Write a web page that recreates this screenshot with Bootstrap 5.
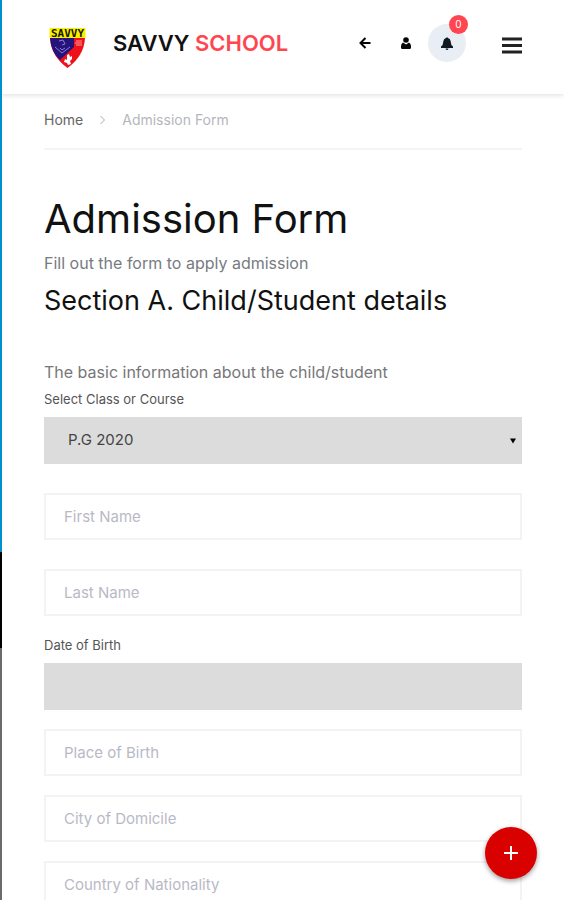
<!DOCTYPE html>
<html lang="en">
<head>
<meta charset="utf-8">
<meta name="viewport" content="width=device-width, initial-scale=1">
<title>Admission Form - Savvy School</title>
<link href="https://cdn.jsdelivr.net/npm/bootstrap@5.3.0/dist/css/bootstrap.min.css" rel="stylesheet">
<style>
body{font-family:Inter,"Open Sans",sans-serif;color:#111;background:#fff;display:flex;min-height:100vh}
.edge{width:2px;flex:none;background:linear-gradient(#0090cc 0 61.3%,#000 61.3% 72%,#6b6b6b 72%);height:100vh;position:sticky;top:0}
.page{min-width:0}
.gutter{padding-left:42px;padding-right:42px}
.topbar{height:94px;box-shadow:0 1px 5px rgba(0,0,0,.14);padding-left:46px;padding-right:42px;padding-bottom:4px}
.crest{margin-top:4px}
.brand-name{font-size:22px;line-height:28px;font-weight:600;color:#111;margin-left:25px;padding-bottom:4px}
.brand-name span{color:#ff4650}
.round{width:38px;height:38px;padding:0;border:0;border-radius:50%;display:flex;align-items:center;justify-content:center;background:none;color:#050505}
.round.active-bell{background:#e9edf4;color:#101820}
.tools{gap:3px;margin-right:36px;padding-bottom:4px}
.count{top:-9px;right:-2px;width:19px;height:19px;border-radius:50%;background:#ff4650;color:#fff;font-size:10px;line-height:18px}
.menu{padding:0;border:0;background:none}
.crumbs{height:56px;font-size:14px;line-height:20px;border-bottom:2px solid #f4f4f5;--bs-breadcrumb-margin-bottom:0;padding-bottom:2px}
.crumbs a{color:#666;text-decoration:none}
.crumbs .active{color:#b5b6bc}
.title{font-size:40px;line-height:48px;font-weight:400;margin:45px 0 0}
.lead-in{font-size:16px;line-height:24px;color:#777b80;margin:8px 0}
.section-title{font-size:27px;line-height:36px;font-weight:400;margin:0}
.hint{font-size:16px;line-height:24px;color:#777;margin:41px 0 5px}
.caption{font-size:13px;line-height:20px;color:#555;margin-bottom:8px;display:block}
.field{height:47px;border:2px solid #f3f3f4;border-radius:0;padding:0 18px;font-size:15px;color:#444}
.field::placeholder{color:#b9b9c6;opacity:1}
.filled,.filled:focus{background-color:#dcdcdc;border-color:#dcdcdc}
.pick{padding-left:22px;background-image:url("data:image/svg+xml,%3Csvg xmlns='http://www.w3.org/2000/svg' viewBox='0 0 6 6'%3E%3Cpath d='M0 0.5h6L3 5.5z'/%3E%3C/svg%3E");background-size:6px 6px;background-position:right 4px center}
input[type=date]::-webkit-calendar-picker-indicator{opacity:0}
input[type=date]:invalid::-webkit-datetime-edit{opacity:0}
.far{margin-bottom:29px}
.near{margin-bottom:19px}
.add{right:27px;bottom:21px;width:52px;height:52px;border:0;border-radius:50%;background:#d90000;box-shadow:0 2px 5px rgba(0,0,0,.4)}
</style>
<script src="https://cdn.jsdelivr.net/npm/bootstrap@5.3.0/dist/js/bootstrap.bundle.min.js"></script>
</head>
<body>
<div class="edge"></div>
<div class="page flex-grow-1">
<header class="topbar d-flex align-items-center">
  <a href="#" class="d-flex align-items-center text-decoration-none text-nowrap">
    <svg class="crest" width="40" height="44" viewBox="0 0 40 44" role="img" aria-label="Savvy School crest">
      <path d="M2 13H37Q36 31 19.500 43Q3 31 2 13Z" fill="#ee1119"/>
      <path d="M2 13H26V22L12 35Q3 27 2 13Z" fill="#25127d"/>
      <path d="M1.500 3H37.500V13H1.500Z" fill="#f8f000"/>
      <text x="19.500" y="12" text-anchor="middle" font-family="DejaVu Sans Mono,monospace" font-weight="700" font-size="11" fill="#171700">SAVVY</text>
      <path d="M11 16l4-1 2 4-3 1M7 22l7 6 8-6M12 23l2 2 3-2" fill="none" stroke="#8580c8"/>
      <path d="M28 16h6M27 18h7M28 20h6" stroke="#ff9a9a"/>
      <path d="M19 30l2-1 1 3 2-1v3l-2 2 1 3-3 1-1-2-3-1 1-3 2 1z" fill="#fff"/>
    </svg>
    <span class="brand-name">SAVVY <span>SCHOOL</span></span>
  </a>
  <div class="tools d-flex align-items-center ms-auto">
    <button class="round" type="button" aria-label="Back"><svg width="12" height="12" viewBox="0 0 12 12" fill="none" stroke="currentColor" stroke-width="2"><path d="M11.500 6H2M6.500 1L1.500 6L6.500 11"/></svg></button>
    <button class="round" type="button" aria-label="Account"><svg width="10" height="12" viewBox="0 0 10 12" fill="currentColor"><circle cx="5" cy="3" r="2.800"/><path d="M2 5.500L5 7.500L8 5.500Q10 6.500 10 9V10.500Q10 12 8.500 12H1.500Q0 12 0 10.500V9Q0 6.500 2 5.500Z"/></svg></button>
    <button class="round active-bell position-relative" type="button" aria-label="Notifications"><svg width="12" height="13" viewBox="0 0 12 13" fill="currentColor"><path d="M5 1Q6-.5 7 1Q9.500 1.600 9.700 4.500Q9.700 8 12 9.500V11H0V9.500Q2.300 8 2.300 4.500Q2.500 1.600 5 1ZM4.500 11.500H7.500Q7.200 13 6 13T4.500 11.500Z"/></svg><span class="count position-absolute text-center">0</span></button>
  </div>
  <button class="menu d-flex" type="button" aria-label="Menu"><svg width="20" height="18" viewBox="0 0 20 18" stroke="#222" stroke-width="3"><path d="M0 3h20M0 9.500h20M0 16h20"/></svg></button>
</header>
<main class="gutter">
  <nav aria-label="Breadcrumb">
    <ol class="breadcrumb crumbs align-items-center">
      <li><a href="#">Home</a></li>
      <li class="px-3 d-flex" aria-hidden="true"><svg width="7" height="10" viewBox="0 0 7 10" fill="none" stroke="#aaa"><path d="M1.500 1L5.500 5L1.500 9"/></svg></li>
      <li class="active" aria-current="page">Admission Form</li>
    </ol>
  </nav>
  <h1 class="title">Admission Form</h1>
  <p class="lead-in">Fill out the form to apply admission</p>
  <h2 class="section-title">Section A. Child/Student details</h2>
  <form>
    <p class="hint">The basic information about the child/student</p>
    <label class="caption" for="course">Select Class or Course</label>
    <select class="form-select field filled pick far" id="course"><option>P.G 2020</option></select>
    <input class="form-control field far" type="text" placeholder="First Name" aria-label="First Name">
    <input class="form-control field near" type="text" placeholder="Last Name" aria-label="Last Name">
    <label class="caption" for="dob">Date of Birth</label>
    <input class="form-control field filled near" id="dob" type="date" required>
    <input class="form-control field near" type="text" placeholder="Place of Birth" aria-label="Place of Birth">
    <input class="form-control field near" type="text" placeholder="City of Domicile" aria-label="City of Domicile">
    <input class="form-control field near" type="text" placeholder="Country of Nationality" aria-label="Country of Nationality">
  </form>
</main>
</div>
<button class="add position-fixed d-flex align-items-center justify-content-center p-0" type="button" aria-label="Add"><svg width="14" height="14" viewBox="0 0 14 14" stroke="#fff" stroke-width="2"><path d="M7 0v14M0 7h14"/></svg></button>
</body>
</html>
